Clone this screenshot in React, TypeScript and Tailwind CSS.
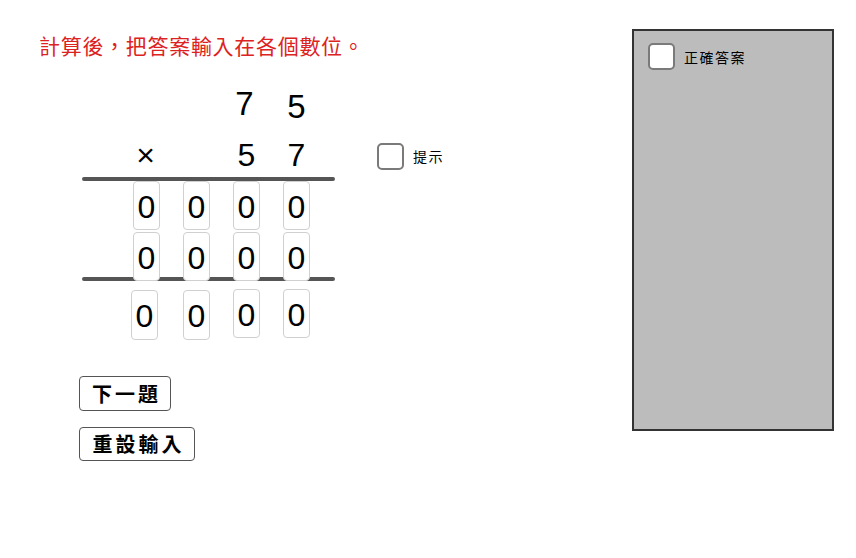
import React from "react";

const sans = { fontFamily: '"Liberation Sans", Arial, sans-serif' };
const cjk = { fontFamily: '"Noto Sans CJK TC", "Noto Sans CJK SC", sans-serif' };

function DigitBox({ className = "" }: { className?: string }) {
  return (
    <div
      className={`relative z-10 flex h-[49px] w-[27px] items-center justify-center rounded-[4px] border border-[#d0d0d0] bg-white pt-[2px] text-[32px] leading-none text-black ${className}`}
      style={sans}
    >
      0
    </div>
  );
}

function Checkbox({ label }: { label: string }) {
  return (
    <div className="flex items-center gap-[9px]">
      <div className="h-[27px] w-[27px] rounded-[5px] border-2 border-[#7a7a7a] bg-white" />
      <span className="text-[14px] leading-none tracking-[1.5px] text-black" style={cjk}>
        {label}
      </span>
    </div>
  );
}

export default function App() {
  return (
    <div className="flex h-[558px] w-[856px] bg-white">
      <div className="flex w-[632px] flex-col">
        <p
          className="ml-[39px] mt-[33px] h-[24px] text-[21px] leading-[24px] tracking-[0.7px] text-[#dd2222]"
          style={cjk}
        >
          計算後，把答案輸入在各個數位。
        </p>

        {/* first factor */}
        <div
          className="ml-[133px] mt-[32px] grid h-[32px] grid-cols-[27px_27px_27px_27px] gap-x-[23px] text-center text-[33px] leading-[32px] text-black"
          style={sans}
        >
          <span />
          <span />
          <span className="-translate-x-[2px] -translate-y-[1px]">7</span>
          <span className="translate-y-[2px]">5</span>
        </div>

        {/* second factor + hint */}
        <div className="mt-[18px] flex h-[32px] items-center">
          <div
            className="ml-[133px] grid grid-cols-[27px_27px_27px_27px] gap-x-[23px] text-center text-[32px] leading-[32px] text-black"
            style={sans}
          >
            <span className="-translate-x-[1px]">×</span>
            <span />
            <span>5</span>
            <span>7</span>
          </div>
          <div className="ml-[67px] mt-[2px]">
            <Checkbox label="提示" />
          </div>
        </div>

        <div className="ml-[82px] mt-[6px] h-[4px] w-[253px] rounded-full bg-[#555555]" />

        <div className="ml-[133px] grid grid-cols-[27px_27px_27px_27px] gap-x-[23px]">
          <DigitBox />
          <DigitBox />
          <DigitBox />
          <DigitBox />
        </div>
        <div className="ml-[133px] mt-[2px] grid grid-cols-[27px_27px_27px_27px] gap-x-[23px]">
          <DigitBox />
          <DigitBox />
          <DigitBox />
          <DigitBox />
        </div>
        <div className="ml-[82px] -mt-[4px] h-[4px] w-[253px] rounded-full bg-[#555555]" />

        <div className="ml-[133px] mt-[9px] grid grid-cols-[27px_27px_27px_27px] gap-x-[23px]">
          <DigitBox className="-translate-x-[2px] h-[50px]" />
          <DigitBox className="h-[50px]" />
          <DigitBox className="-translate-y-[1px]" />
          <DigitBox className="-translate-y-[1px]" />
        </div>

        <button
          className="ml-[79px] mt-[36px] flex h-[35px] w-[92px] items-center justify-center rounded-[4px] border border-[#555555] bg-white pl-[3px] text-[20px] font-bold leading-none tracking-[3px] text-black"
          style={cjk}
        >
          下一題
        </button>
        <button
          className="ml-[79px] mt-[16px] flex h-[34px] w-[116px] items-center justify-center rounded-[4px] border border-[#555555] bg-white pl-[3px] text-[20px] font-bold leading-none tracking-[3px] text-black"
          style={cjk}
        >
          重設輸入
        </button>
      </div>

      <div className="mt-[29px] h-[402px] w-[202px] border-2 border-[#333333] bg-[#bcbcbc] pl-[14px] pt-[12px]">
        <Checkbox label="正確答案" />
      </div>
    </div>
  );
}
